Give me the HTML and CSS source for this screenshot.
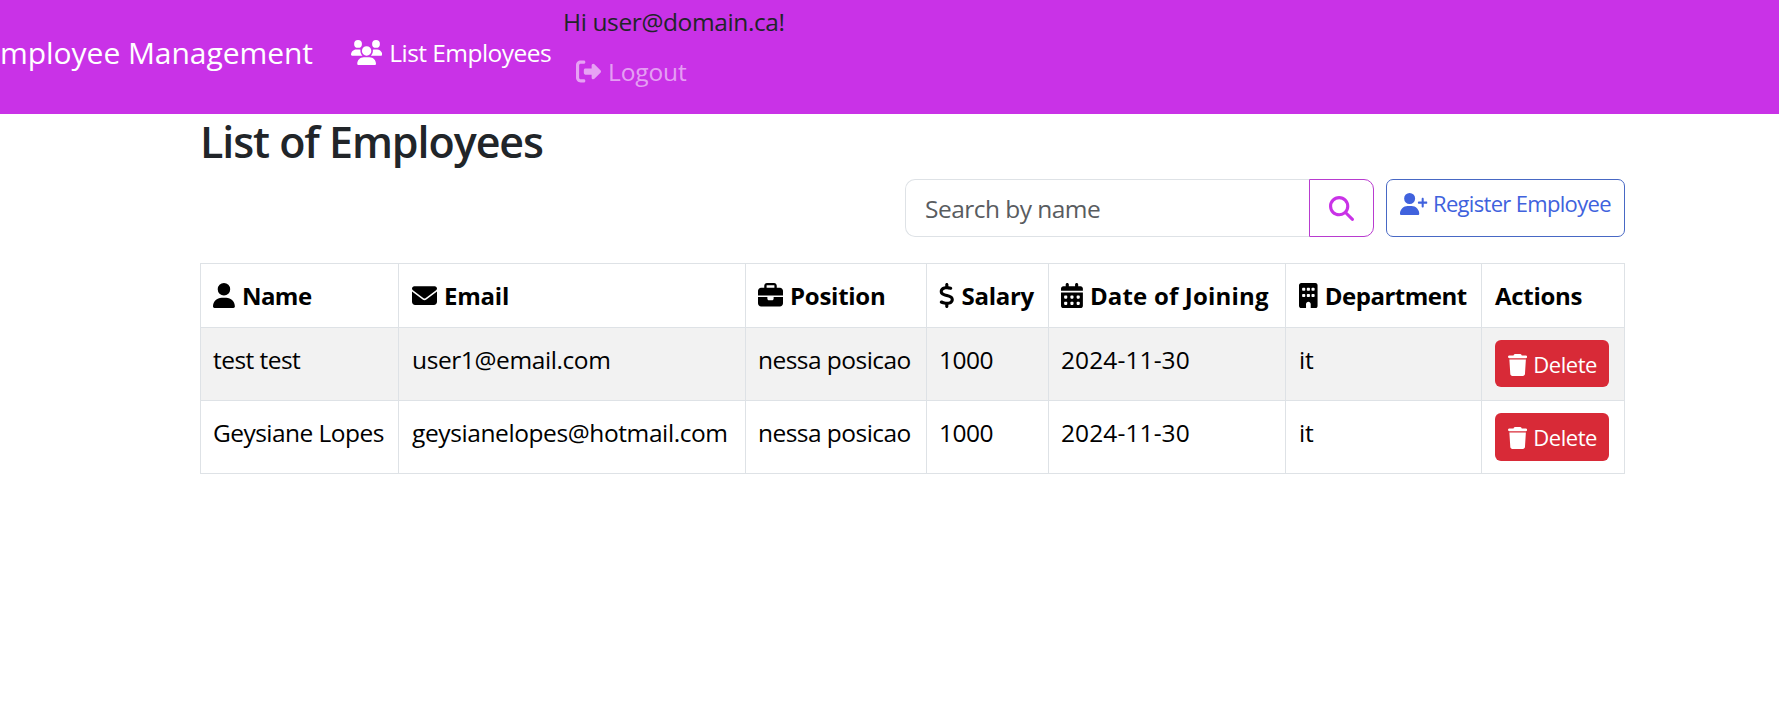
FILE: index.html
```html
<!DOCTYPE html>
<html lang="en">
<head>
<meta charset="utf-8">
<title>Employee Management</title>
<link rel="stylesheet" href="styles.css">
</head>
<body>
<svg class="sprite" aria-hidden="true">
<symbol id="users" viewBox="0 0 640 512"><path d="M144 0a80 80 0 1 1 0 160A80 80 0 1 1 144 0zM512 0a80 80 0 1 1 0 160A80 80 0 1 1 512 0zM0 298.7C0 239.8 47.8 192 106.7 192h42.7c15.9 0 31 3.5 44.6 9.7c-1.3 7.2-1.9 14.7-1.9 22.3c0 38.2 16.8 72.5 43.3 96H21.3C9.6 320 0 310.4 0 298.7zM405.3 320c26.6-23.5 43.3-57.8 43.3-96c0-7.6-.7-15-1.9-22.3c13.6-6.3 28.7-9.7 44.6-9.7h42.7C592.2 192 640 239.8 640 298.7c0 11.8-9.6 21.3-21.3 21.3H405.3zM224 224a96 96 0 1 1 192 0 96 96 0 1 1 -192 0zM128 485.3C128 411.7 187.7 352 261.3 352H378.7C452.3 352 512 411.7 512 485.3c0 14.7-11.9 26.7-26.7 26.7H154.7c-14.7 0-26.7-11.9-26.7-26.7z"/></symbol>
<symbol id="logout" viewBox="0 0 512 512"><path d="M377.9 105.9L500.7 228.7c7.2 7.2 11.3 17.1 11.3 27.3s-4.1 20.1-11.3 27.3L377.9 406.1c-6.4 6.4-15 9.9-24 9.9c-18.7 0-33.9-15.2-33.9-33.9l0-62.1-128 0c-17.7 0-32-14.3-32-32l0-64c0-17.7 14.3-32 32-32l128 0 0-62.1c0-18.7 15.2-33.9 33.9-33.9c9 0 17.6 3.6 24 9.9zM160 96L96 96c-17.7 0-32 14.3-32 32l0 256c0 17.7 14.3 32 32 32l64 0c17.7 0 32 14.3 32 32s-14.3 32-32 32l-64 0c-53 0-96-43-96-96L0 128C0 75 43 32 96 32l64 0c17.7 0 32 14.3 32 32s-14.3 32-32 32z"/></symbol>
<symbol id="search" viewBox="0 0 512 512"><path d="M416 208c0 45.900-14.900 88.300-40 122.700L502.600 457.400c12.500 12.500 12.500 32.800 0 45.300s-32.800 12.500-45.300 0L330.700 376c-34.400 25.200-76.800 40-122.700 40C93.100 416 0 322.900 0 208S93.100 0 208 0S416 93.100 416 208zM208 352a144 144 0 1 0 0-288 144 144 0 1 0 0 288z"/></symbol>
<symbol id="user-plus" viewBox="0 0 640 512"><path d="M96 128a128 128 0 1 1 256 0A128 128 0 1 1 96 128zM0 482.3C0 383.8 79.800 304 178.300 304l91.400 0C368.200 304 448 383.800 448 482.300c0 16.400-13.300 29.700-29.700 29.700L29.700 512C13.300 512 0 498.700 0 482.300zM504 312l0-64-64 0c-13.300 0-24-10.700-24-24s10.700-24 24-24l64 0 0-64c0-13.300 10.700-24 24-24s24 10.700 24 24l0 64 64 0c13.300 0 24 10.700 24 24s-10.700 24-24 24l-64 0 0 64c0 13.300-10.700 24-24 24s-24-10.700-24-24z"/></symbol>
<symbol id="user" viewBox="0 0 448 512"><path d="M224 256A128 128 0 1 0 224 0a128 128 0 1 0 0 256zm-45.7 48C79.8 304 0 383.8 0 482.3C0 498.700 13.300 512 29.700 512l388.600 0c16.400 0 29.700-13.300 29.700-29.700C448 383.800 368.200 304 269.700 304l-91.400 0z"/></symbol>
<symbol id="envelope" viewBox="0 0 512 512"><path d="M48 64C21.500 64 0 85.500 0 112c0 15.100 7.100 29.300 19.200 38.400L236.800 313.600c11.400 8.500 27 8.500 38.400 0L492.800 150.400c12.100-9.100 19.200-23.300 19.200-38.400c0-26.500-21.500-48-48-48L48 64zM0 176L0 384c0 35.300 28.700 64 64 64l384 0c35.300 0 64-28.700 64-64l0-208L294.400 339.200c-22.800 17.100-54 17.100-76.800 0L0 176z"/></symbol>
<symbol id="briefcase" viewBox="0 0 512 512"><path d="M184 48l144 0c4.400 0 8 3.600 8 8l0 40L176 96l0-40c0-4.400 3.600-8 8-8zm-56 8l0 40L64 96C28.700 96 0 124.700 0 160l0 96 512 0 0-96c0-35.300-28.700-64-64-64l-64 0 0-40c0-30.900-25.100-56-56-56L184 0c-30.900 0-56 25.100-56 56zM512 288l-192 0 0 32c0 17.700-14.300 32-32 32l-64 0c-17.700 0-32-14.300-32-32l0-32L0 288 0 416c0 35.300 28.700 64 64 64l384 0c35.300 0 64-28.700 64-64l0-128z"/></symbol>
<symbol id="dollar" viewBox="0 0 320 512"><path d="M160 0c17.700 0 32 14.300 32 32l0 35.700c1.600 .2 3.100 .4 4.700 .7c.4 .1 .7 .1 1.100 .2l48 8.800c17.400 3.200 28.900 19.900 25.700 37.200s-19.900 28.900-37.200 25.700l-47.500-8.700c-31.300-4.600-58.900-1.500-78.300 6.200s-27.200 18.300-29 28.100c-2 10.700-.5 16.700 1.200 20.400c1.800 3.900 5.500 8.300 12.800 13.200c16.300 10.700 41.300 17.700 73.700 26.300l2.900 .8c28.600 7.600 63.600 16.800 89.600 33.800c14.200 9.300 27.600 21.900 35.900 39.500c8.500 17.900 10.300 37.900 6.400 59.200c-6.900 38-33.100 63.400-65.600 76.700c-13.700 5.600-28.600 9.200-44.400 11l0 33.400c0 17.700-14.300 32-32 32s-32-14.300-32-32l0-34.900c-.4-.1-.9-.1-1.300-.2l-.2 0c-24.400-3.800-64.500-14.300-91.500-26.300c-16.100-7.200-23.400-26.100-16.200-42.200s26.100-23.400 42.200-16.200c20.900 9.300 55.300 18.500 75.200 21.600c31.900 4.700 58.200 2 76-5.300c16.900-6.900 24.600-16.900 26.800-28.900c1.900-10.600 .4-16.700-1.300-20.400c-1.900-4-5.600-8.400-13-13.300c-16.400-10.700-41.500-17.700-74-26.300l-2.800-.7C119.400 279.300 84.400 270 58.400 253c-14.200-9.300-27.500-22-35.800-39.600c-8.400-17.900-10.100-37.900-6.100-59.200C23.700 116 52.300 91.200 84.800 78.300c13.300-5.300 27.900-8.900 43.200-11L128 32c0-17.700 14.300-32 32-32z"/></symbol>
<symbol id="calendar" viewBox="0 0 448 512"><path fill-rule="evenodd" d="M128 0c17.700 0 32 14.300 32 32l0 32 128 0 0-32c0-17.700 14.300-32 32-32s32 14.300 32 32l0 32 48 0c26.500 0 48 21.500 48 48l0 48L0 160l0-48C0 85.500 21.500 64 48 64l48 0 0-32c0-17.700 14.300-32 32-32zM0 192l448 0 0 272c0 26.500-21.500 48-48 48L48 512c-26.500 0-48-21.500-48-48zM80 256h32q16 0 16 16v32q0 16-16 16H80q-16 0-16-16v-32q0-16 16-16zM208 256h32q16 0 16 16v32q0 16-16 16h-32q-16 0-16-16v-32q0-16 16-16zM336 256h32q16 0 16 16v32q0 16-16 16h-32q-16 0-16-16v-32q0-16 16-16zM80 384h32q16 0 16 16v32q0 16-16 16H80q-16 0-16-16v-32q0-16 16-16zM208 384h32q16 0 16 16v32q0 16-16 16h-32q-16 0-16-16v-32q0-16 16-16zM336 384h32q16 0 16 16v32q0 16-16 16h-32q-16 0-16-16v-32q0-16 16-16z"/></symbol>
<symbol id="building" viewBox="0 0 384 512"><path fill-rule="evenodd" d="M48 0C21.500 0 0 21.500 0 48L0 464c0 26.500 21.500 48 48 48l96 0 0-80c0-26.500 21.500-48 48-48s48 21.500 48 48l0 80 96 0c26.500 0 48-21.500 48-48l0-416c0-26.500-21.500-48-48-48zM80 96h32q16 0 16 16v32q0 16-16 16H80q-16 0-16-16v-32q0-16 16-16zM176 96h32q16 0 16 16v32q0 16-16 16h-32q-16 0-16-16v-32q0-16 16-16zM272 96h32q16 0 16 16v32q0 16-16 16h-32q-16 0-16-16v-32q0-16 16-16zM80 224h32q16 0 16 16v32q0 16-16 16H80q-16 0-16-16v-32q0-16 16-16zM176 224h32q16 0 16 16v32q0 16-16 16h-32q-16 0-16-16v-32q0-16 16-16zM272 224h32q16 0 16 16v32q0 16-16 16h-32q-16 0-16-16v-32q0-16 16-16z"/></symbol>
<symbol id="trash" viewBox="0 0 448 512"><path d="M135.200 17.700L128 32 32 32C14.300 32 0 46.300 0 64S14.300 96 32 96l384 0c17.700 0 32-14.300 32-32s-14.300-32-32-32l-96 0-7.200-14.300C307.400 6.800 296.300 0 284.200 0L163.800 0c-12.100 0-23.200 6.800-28.600 17.700zM416 128L32 128 53.200 467c1.600 25.300 22.600 45 47.900 45l245.800 0c25.300 0 46.300-19.700 47.900-45L416 128z"/></symbol>
</svg>

<nav class="navbar">
  <a class="brand">Employee Management</a>
  <a class="nav-link"><svg class="icon w640"><use href="#users"/></svg><span class="list-label">List Employees</span></a>
  <div class="account">
    <span class="greeting">Hi user@domain.ca!</span>
    <a class="logout"><svg class="icon w512"><use href="#logout"/></svg><span>Logout</span></a>
  </div>
</nav>

<main class="container">
  <h2 class="title">List of Employees</h2>
  <div class="toolbar">
    <div class="search">
      <input class="search-input" type="text" placeholder="Search by name">
      <button class="search-btn" aria-label="Search"><svg class="icon w512"><use href="#search"/></svg></button>
    </div>
    <a class="register"><svg class="icon w640"><use href="#user-plus"/></svg><span>Register Employee</span></a>
  </div>

  <table class="employees">
    <colgroup><col class="c-name"><col class="c-email"><col class="c-position"><col class="c-salary"><col class="c-date"><col class="c-dept"><col class="c-actions"></colgroup>
    <thead>
      <tr>
        <th><svg class="icon w448"><use href="#user"/></svg><span class="h-name">Name</span></th>
        <th class="email"><svg class="icon w512"><use href="#envelope"/></svg><span class="h-email">Email</span></th>
        <th><svg class="icon w512"><use href="#briefcase"/></svg><span class="h-position">Position</span></th>
        <th><svg class="icon w320"><use href="#dollar"/></svg><span class="h-salary">Salary</span></th>
        <th><svg class="icon w448"><use href="#calendar"/></svg><span class="h-date">Date of Joining</span></th>
        <th class="dept"><svg class="icon w384"><use href="#building"/></svg><span class="h-dept">Department</span></th>
        <th class="actions"><span class="h-actions">Actions</span></th>
      </tr>
    </thead>
    <tbody>
      <tr>
        <td>test test</td><td class="email">user1@email.com</td><td>nessa posicao</td><td>1000</td><td class="date">2024-11-30</td><td class="dept">it</td>
        <td class="actions"><button class="delete"><svg class="icon w448"><use href="#trash"/></svg><span>Delete</span></button></td>
      </tr>
      <tr>
        <td>Geysiane Lopes</td><td class="email">geysianelopes@hotmail.com</td><td>nessa posicao</td><td>1000</td><td class="date">2024-11-30</td><td class="dept">it</td>
        <td class="actions"><button class="delete"><svg class="icon w448"><use href="#trash"/></svg><span>Delete</span></button></td>
      </tr>
    </tbody>
  </table>
</main>
</body>
</html>
```
FILE: styles.css
```css
* { box-sizing: border-box; }

body {
  margin: 0;
  background: #fff;
  color: #212529;
  font: 400 24.5px/38px "Open Sans", "Noto Sans", sans-serif;
  letter-spacing: -0.54px;
  overflow: hidden;
}

.sprite { display: none; }

.icon {
  height: 25px;
  fill: currentColor;
  vertical-align: -3px;
  margin-right: 7px;
}
.w640 { width: 31.25px; }
.w512 { width: 25px; }
.w448 { width: 21.9px; }
.w384 { width: 18.75px; }
.w320 { width: 15.6px; }

.navbar {
  display: flex;
  height: 114px;
  background: #c932e7;
  white-space: nowrap;
}
.brand {
  display: flex;
  justify-content: flex-end;
  width: 313px;
  padding-top: 34px;
  color: #fff;
  font-size: 30px;
  letter-spacing: -0.05px;
}
.nav-link {
  width: 250px;
  padding: 34px 0 0 38px;
  color: #fff;
}
.account { display: flex; flex-direction: column; }
.greeting {
  padding-top: 3px;
  letter-spacing: -0.38px;
  color: #212529;
}
.logout {
  padding: 12px 0 0 13px;
  letter-spacing: -0.12px;
  color: rgba(255, 255, 255, 0.55);
}

.container { width: 1425px; margin-left: 200px; }

.title {
  margin: 0;
  padding: 2px 0 11px;
  font-size: 43px;
  font-weight: 600;
  line-height: 52px;
  letter-spacing: -1.06px;
}

.toolbar {
  display: flex;
  justify-content: flex-end;
  gap: 12px;
  height: 58px;
  margin-bottom: 26px;
}
.search { display: flex; width: 469px; }
.search-input {
  flex: 1;
  min-width: 0;
  padding: 2px 18px 0 19px;
  border: 1px solid #dee2e6;
  border-right: 0;
  border-radius: 10px 0 0 10px;
  background: #fff;
  font: inherit;
  letter-spacing: -0.53px;
}
.search-input::placeholder { color: #595c5f; opacity: 1; }
.search-btn {
  width: 65px;
  padding: 0;
  border: 1px solid #b83bcf;
  border-radius: 0 10px 10px 0;
  background: #fff;
  color: #c932e7;
}
.search-btn .icon { margin: 0; vertical-align: middle; }
.register {
  width: 239px;
  padding: 7px 0 0 13px;
  border: 1px solid #4868c4;
  border-radius: 7px;
  color: #4062dd;
  font-size: 22px;
  line-height: 33px;
  letter-spacing: -0.68px;
  white-space: nowrap;
}
.register .icon { width: 27.5px; height: 22px; margin-right: 5.5px; }

.employees {
  width: 1425px;
  table-layout: fixed;
  border-collapse: collapse;
  color: #000;
}
.c-name { width: 198px; }
.c-email { width: 347px; }
.c-position { width: 181px; }
.c-salary { width: 122px; }
.c-date { width: 237px; }
.c-dept { width: 196px; }
.c-actions { width: 143px; }

.employees th,
.employees td {
  padding: 12px 0 0 12px;
  border: 1px solid #dee2e6;
  text-align: left;
  vertical-align: top;
  white-space: nowrap;
}
.employees th { height: 64px; padding-top: 13px; font-size: 24px; }
.employees td { height: 73px; line-height: 39px; }
.employees tbody tr:first-child { background: #f2f2f2; }
.employees .email,
.employees .dept,
.employees .actions { padding-left: 13px; }

.h-name { letter-spacing: -0.52px; }
.h-email { letter-spacing: -0.21px; }
.h-position { letter-spacing: -0.26px; }
.h-salary { letter-spacing: -0.29px; }
.h-date { letter-spacing: 0.18px; }
.h-dept { letter-spacing: -0.5px; }
.h-actions { letter-spacing: -0.3px; }
.email { letter-spacing: -0.4px; }
.date { letter-spacing: 0.1px; }
.dept { letter-spacing: -0.18px; }

.delete {
  display: block;
  width: 114px;
  height: 48px;
  padding: 0 0 0 13px;
  border: 0;
  border-radius: 6px;
  background: #d82a37;
  color: #fff;
  font: inherit;
  font-size: 22px;
  line-height: 48px;
  letter-spacing: -0.45px;
  text-align: left;
}
.employees tbody tr:first-child .delete { height: 47px; line-height: 46px; }
.delete .icon { width: 19.25px; height: 22px; margin-right: 6px; }
```
